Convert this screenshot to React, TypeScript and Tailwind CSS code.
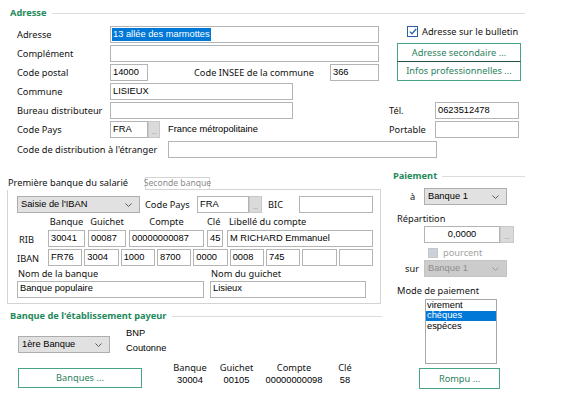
import React from "react";

const ARIAL = "font-['Liberation_Sans',Arial,sans-serif] text-[9.3px]";

function Field({ className = "", children }: { className?: string; children?: React.ReactNode }) {
  return (
    <div
      className={
        "flex h-[17px] shrink-0 items-center overflow-hidden whitespace-nowrap border border-[#b4b4b4] bg-white px-[2px] text-black " +
        ARIAL +
        " " +
        className
      }
    >
      {children}
    </div>
  );
}

function Chevron({ color = "#5a5a5a" }: { color?: string }) {
  return (
    <svg width="7" height="4" viewBox="0 0 7 4" className="shrink-0">
      <path d="M0.5 0.5 L3.5 3.5 L6.5 0.5" fill="none" stroke={color} strokeWidth="1" />
    </svg>
  );
}

function Select({ className = "", value, disabled = false }: { className?: string; value: string; disabled?: boolean }) {
  return (
    <div
      className={
        "flex h-[17px] shrink-0 items-center justify-between whitespace-nowrap border pl-[3px] pr-[7px] " +
        ARIAL +
        " " +
        (disabled
          ? "border-[#c4c4c4] bg-[#cccccc] text-[#8d8d8d] "
          : "border-[#adadad] bg-[#e1e1e1] text-black ") +
        className
      }
    >
      <span>{value}</span>
      <Chevron color={disabled ? "#9a9a9a" : "#5a5a5a"} />
    </div>
  );
}

function DotsButton({ className = "" }: { className?: string }) {
  return (
    <div
      className={
        "flex h-[17px] shrink-0 items-end justify-center border border-[#c8c8c8] bg-[#dadada] pb-[2px] text-[6px] leading-none text-[#8a8a8a] " +
        className
      }
    >
      ...
    </div>
  );
}

function GreenButton({ className = "", children }: { className?: string; children: React.ReactNode }) {
  return (
    <div
      className={
        "flex shrink-0 items-center justify-center whitespace-nowrap border border-[#47a585] bg-white text-[#2c7f5e] " +
        className
      }
    >
      {children}
    </div>
  );
}

function SectionTitle({ className = "", children }: { className?: string; children: React.ReactNode }) {
  return (
    <div className={"flex h-[12px] items-center " + className}>
      <span className="whitespace-nowrap font-bold text-[#1e8a5b]">{children}</span>
      <div className="ml-[5px] h-px flex-1 bg-[#dcdcdc]" />
    </div>
  );
}

function Row({ label, children }: { label: string; children?: React.ReactNode }) {
  return (
    <div className="flex h-[17px] items-center">
      <span className="w-[93px] shrink-0 whitespace-nowrap">{label}</span>
      {children}
    </div>
  );
}

export default function App() {
  const iban = ["FR76", "3004", "1000", "8700", "0000", "0008", "745", "", ""];

  return (
    <div className="h-[411px] w-[576px] overflow-hidden bg-white pt-[7px] font-['Noto_Sans',sans-serif] text-[9.25px] leading-none text-[#111]">
      {/* Adresse */}
      <SectionTitle className="ml-[10px] mr-[51px]">Adresse</SectionTitle>

      <div className="mt-[7px] flex">
        <div className="flex w-[389px] shrink-0 flex-col gap-[2px] pl-[17px]">
          <Row label="Adresse">
            <Field className="w-[269px] !px-[1px] py-[1px]">
              <span className="flex h-full items-center bg-[#0078d7] px-[1px] text-white">13 allée des marmottes</span>
            </Field>
          </Row>
          <Row label="Complément">
            <Field className="w-[269px]" />
          </Row>
          <Row label="Code postal">
            <Field className="w-[38px]">14000</Field>
            <span className="w-[182px] shrink-0 whitespace-nowrap pl-[46px]">Code INSEE de la commune</span>
            <Field className="w-[49px]">366</Field>
          </Row>
          <Row label="Commune">
            <Field className="w-[183px]">LISIEUX</Field>
          </Row>
          <Row label="Bureau distributeur">
            <Field className="w-[183px]" />
          </Row>
          <Row label="Code Pays">
            <Field className="w-[38px]">FRA</Field>
            <DotsButton className="w-[12px]" />
            <span className={"ml-[8px] whitespace-nowrap text-black " + ARIAL}>France métropolitaine</span>
          </Row>
        </div>

        <div className="flex flex-col">
          <div className="flex h-[11px] items-center pl-[18px]">
            <div className="flex h-[11px] w-[11px] items-center justify-center border border-[#2b5fa0] bg-white">
              <svg width="8" height="7" viewBox="0 0 8 7">
                <path d="M0.8 3.6 L3 5.8 L7.2 1" fill="none" stroke="#2b64b0" strokeWidth="1.3" />
              </svg>
            </div>
            <span className="ml-[4px] whitespace-nowrap">Adresse sur le bulletin</span>
          </div>
          <div className="ml-[8px] mt-[6px] flex w-[124px] flex-col">
            <GreenButton className="h-[19px] border-b-[#1f4f3f]">Adresse secondaire ...</GreenButton>
            <GreenButton className="h-[19px] border-t-0">Infos professionnelles ...</GreenButton>
          </div>
          <div className="mt-[21px] flex h-[17px] items-center">
            <span className="w-[46px] shrink-0">Tél.</span>
            <Field className="w-[84px]">0623512478</Field>
          </div>
          <div className="mt-[2px] flex h-[17px] items-center">
            <span className="w-[46px] shrink-0">Portable</span>
            <Field className="w-[84px]" />
          </div>
        </div>
      </div>

      <div className="mt-[3px] flex h-[17px] items-center pl-[17px]">
        <span className="w-[151px] shrink-0 whitespace-nowrap">Code de distribution à l'étranger</span>
        <Field className="w-[269px]" />
      </div>

      {/* Banques + Paiement */}
      <div className="mt-[12px] flex">
        <div className="flex w-[389px] shrink-0 flex-col pl-[7px] pt-[6px]">
          {/* Tabs */}
          <div className="flex h-[14px] w-[374px] items-end">
            <div className="flex h-[14px] w-[138px] shrink-0 items-center whitespace-nowrap pl-[1px]">
              Première banque du salarié
            </div>
            <div className="flex h-[13px] w-[65px] shrink-0 items-center justify-center whitespace-nowrap border border-[#d4d4d4] text-[8.6px] text-[#8c8c8c]">
              Seconde banque
            </div>
            <div className="h-px flex-1 bg-[#d4d4d4]" />
          </div>

          <div className="w-[374px] border border-t-0 border-[#d4d4d4] pb-[6px] pl-[9px] pt-[6px]">
            <div className="flex h-[17px] items-center">
              <Select className="w-[123px]" value="Saisie de l'IBAN" />
              <span className="w-[57px] shrink-0 whitespace-nowrap pl-[5px]">Code Pays</span>
              <Field className="w-[52px]">FRA</Field>
              <DotsButton className="w-[13px]" />
              <span className="w-[37px] shrink-0 pl-[6px]">BIC</span>
              <Field className="w-[74px]" />
            </div>

            <div className="flex h-[17px] items-center pl-[31px]">
              <span className="w-[37px] shrink-0 text-center">Banque</span>
              <span className="ml-[3px] w-[38px] shrink-0 text-center">Guichet</span>
              <span className="ml-[3px] w-[75px] shrink-0 text-center">Compte</span>
              <span className="ml-[3px] w-[16px] shrink-0">Clé</span>
              <span className="ml-[6px] whitespace-nowrap">Libellé du compte</span>
            </div>

            <div className="flex h-[17px] items-center">
              <span className="w-[31px] shrink-0 pl-[2px] pt-[3px]">RIB</span>
              <Field className="w-[37px]">30041</Field>
              <Field className="ml-[3px] w-[38px]">00087</Field>
              <Field className="ml-[3px] w-[75px]">00000000087</Field>
              <Field className="ml-[3px] w-[16px]">45</Field>
              <Field className="ml-[4px] w-[146px]">M RICHARD Emmanuel</Field>
            </div>

            <div className="mt-[2px] flex h-[17px] items-center">
              <span className="w-[31px] shrink-0 pt-[3px]">IBAN</span>
              <div className="grid w-[325px] grid-cols-9 gap-[2px]">
                {iban.map((v, i) => (
                  <Field key={i}>{v}</Field>
                ))}
              </div>
            </div>

            <div className="flex h-[15px] items-center">
              <span className="w-[194px] shrink-0 pl-[1px]">Nom de la banque</span>
              <span>Nom du guichet</span>
            </div>

            <div className="flex h-[16px] items-center">
              <Field className="h-[16px] w-[187px]">Banque populaire</Field>
              <Field className="ml-[6px] h-[16px] w-[156px]">Lisieux</Field>
            </div>
          </div>

          <SectionTitle className="ml-[3px] mr-[7px] mt-[6px]">Banque de l'établissement payeur</SectionTitle>

          <div className="mt-[4px] flex items-start">
            <Select className="ml-[11px] mt-[10px] w-[92px]" value="1ère Banque" />
            <div className={"ml-[16px] flex flex-col text-black " + ARIAL}>
              <span className="flex h-[15px] items-center">BNP</span>
              <span className="flex h-[15px] items-center">Coutonne</span>
            </div>
          </div>

          <div className="mt-[5px] flex items-start">
            <GreenButton className="ml-[11px] mt-[7px] h-[20px] w-[124px]">Banques ...</GreenButton>
            <div className="ml-[28px] flex">
              {[
                ["Banque", "30004", "w-[40px]"],
                ["Guichet", "00105", "ml-[6px] w-[41px]"],
                ["Compte", "00000000098", "ml-[5px] w-[64px]"],
                ["Clé", "58", "ml-[8px] w-[22px]"],
              ].map(([h, v, c]) => (
                <div key={h} className={"flex shrink-0 flex-col items-center " + c}>
                  <span className="flex h-[13px] items-center whitespace-nowrap">{h}</span>
                  <span className={"flex h-[13px] items-center whitespace-nowrap text-black " + ARIAL}>{v}</span>
                </div>
              ))}
            </div>
          </div>
        </div>

        {/* Paiement */}
        <div className="flex flex-1 flex-col">
          <SectionTitle className="ml-[4px] mr-[51px]">Paiement</SectionTitle>

          <div className="mt-[6px] flex h-[17px] items-center">
            <span className="w-[35px] shrink-0 pl-[21px]">à</span>
            <Select className="w-[83px]" value="Banque 1" />
          </div>

          <div className="mt-[7px] flex h-[14px] items-center pl-[8px]">Répartition</div>

          <div className="flex h-[17px] items-center pl-[35px]">
            <Field className="w-[76px] justify-center">0,0000</Field>
            <DotsButton className="w-[14px]" />
          </div>

          <div className="mt-[4px] flex h-[11px] items-center pl-[39px]">
            <div className="h-[10px] w-[10px] border border-[#c2c8cf] bg-[#cdd2d8]" />
            <span className="ml-[5px] text-[#a3a3a3]">pourcent</span>
          </div>

          <div className="mt-[2px] flex h-[17px] items-center">
            <span className="w-[35px] shrink-0 pl-[16px]">sur</span>
            <Select className="w-[83px]" value="Banque 1" disabled />
          </div>

          <div className="mt-[7px] flex h-[14px] items-center pl-[8px]">Mode de paiement</div>

          <div className={"ml-[36px] mt-[1px] flex h-[65px] w-[72px] flex-col border border-[#a8a8a8] bg-white text-black " + ARIAL}>
            <span className="flex h-[10.5px] items-center pl-[1px]">virement</span>
            <span className="flex h-[10.5px] items-center bg-[#0078d7] pl-[1px] text-white">chéques</span>
            <span className="flex h-[10.5px] items-center pl-[1px]">espéces</span>
          </div>

          <GreenButton className="ml-[30px] mt-[4px] h-[21px] w-[81px]">Rompu ...</GreenButton>
        </div>
      </div>
    </div>
  );
}
